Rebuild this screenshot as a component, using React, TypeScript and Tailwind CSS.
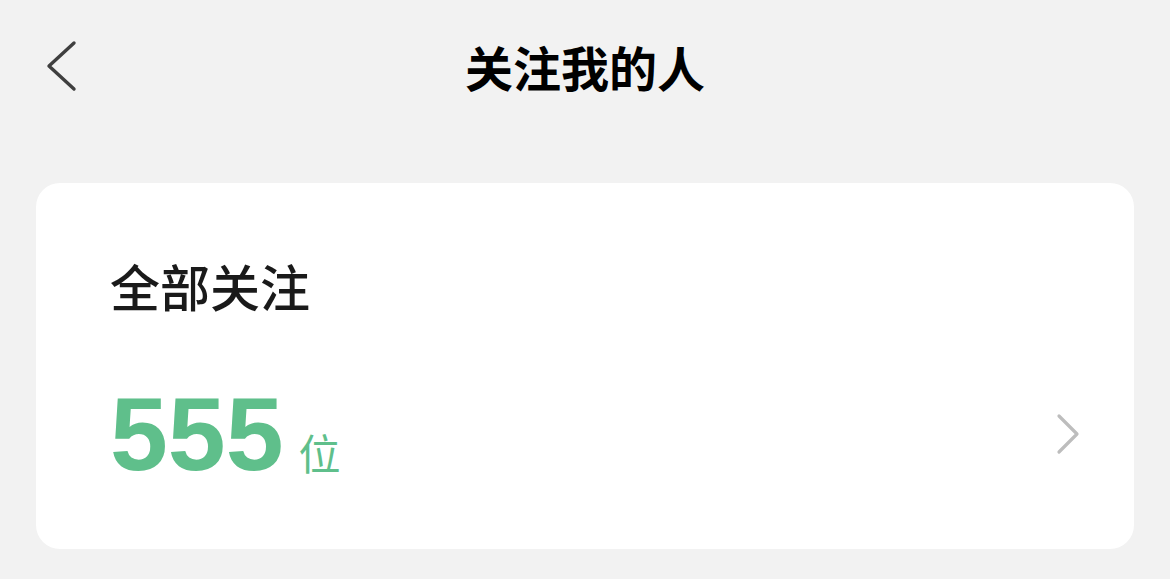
import React from "react";

const cjk = { fontFamily: '"Noto Sans CJK SC", "Noto Sans", sans-serif' };
const num = { fontFamily: '"Liberation Sans", Arial, sans-serif' };

function BackIcon() {
  return (
    <svg width="34" height="52" viewBox="0 0 34 52" fill="none">
      <path d="M30 3 L5 26 L30 49" stroke="#3f3f3f" strokeWidth="3.4" strokeLinecap="round" strokeLinejoin="round" />
    </svg>
  );
}

function ChevronRight() {
  return (
    <svg width="26" height="42" viewBox="0 0 26 42" fill="none">
      <path d="M3 3 L21 21 L3 39" stroke="#bdbdbd" strokeWidth="3.2" strokeLinecap="round" strokeLinejoin="round" />
    </svg>
  );
}

export default function App() {
  return (
    <div className="w-[1170px] h-[579px] bg-[#f2f2f2] overflow-hidden" style={cjk}>
      <header className="h-[132px] grid grid-cols-[1fr_auto_1fr] items-center">
        <div className="pl-[44px] flex items-center">
          <BackIcon />
        </div>
        <h1 className="text-[48px] leading-none font-bold text-black">关注我的人</h1>
        <div />
      </header>

      <section className="mx-[36px] mt-[51px] bg-white rounded-[24px] pl-[74px] pr-[52px] pt-[77px] pb-[63px]">
        <div className="text-[50px] leading-none font-medium text-[#1a1a1a]">全部关注</div>
        <div className="mt-[72px] flex items-center justify-between">
          <div className="flex items-baseline gap-[15px] text-[#5fbf8b]">
            <span className="text-[104px] leading-none font-bold" style={num}>555</span>
            <span className="text-[42px] leading-none">位</span>
          </div>
          <ChevronRight />
        </div>
      </section>
    </div>
  );
}
